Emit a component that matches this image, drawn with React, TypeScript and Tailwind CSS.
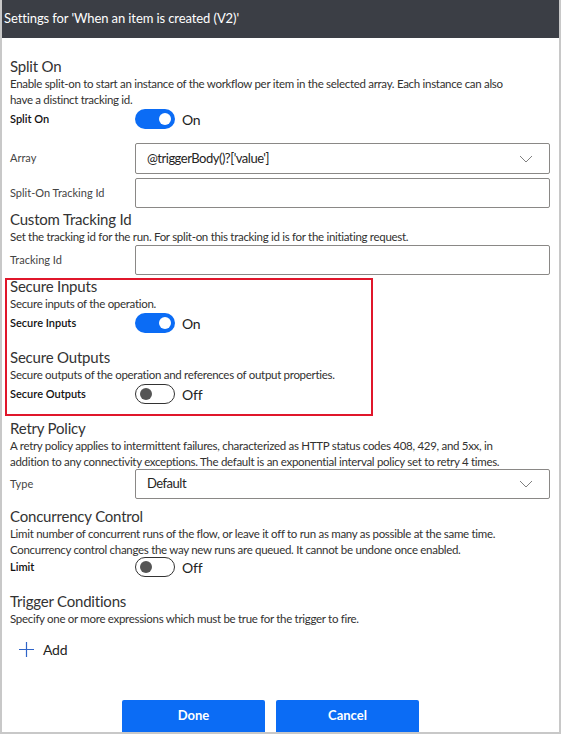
import React from 'react';

const Toggle: React.FC<{ on: boolean }> = ({ on }) => (
  <div className="flex items-center gap-[7px]">
    {on ? (
      <div className="w-[40px] h-[20px] rounded-full bg-[#0b6cf5] flex items-center justify-end pr-[4px]">
        <div className="w-[12px] h-[12px] rounded-full bg-white" />
      </div>
    ) : (
      <div className="w-[40px] h-[20px] rounded-full border border-[#333] bg-white flex items-center pl-[4px]">
        <div className="w-[12px] h-[12px] rounded-full bg-[#555]" />
      </div>
    )}
    <span className="text-[14px] tracking-[-0.2px] text-[#222]">{on ? 'On' : 'Off'}</span>
  </div>
);

const Chevron = () => (
  <svg width="14" height="8" viewBox="0 0 14 8" fill="none">
    <polyline points="1,1 7,7 13,1" stroke="#808080" strokeWidth="1" />
  </svg>
);

const Heading: React.FC<{ children: React.ReactNode }> = ({ children }) => (
  <div className="text-[15px] tracking-[-0.2px] leading-[19px] text-[#333]">{children}</div>
);

const Desc: React.FC<{ children: React.ReactNode }> = ({ children }) => (
  <p className="text-[11.5px] tracking-[-0.3px] leading-[16px] text-[#323130] max-w-[506px]">{children}</p>
);

const Row: React.FC<{ label: string; bold?: boolean; className?: string; children: React.ReactNode }> = ({
  label,
  bold,
  className,
  children,
}) => (
  <div className={`flex items-center ${className ?? ''}`}>
    <div
      className={`w-[125px] shrink-0 text-[11px] ${bold ? 'font-semibold text-[#111]' : 'text-[#444]'}`}
    >
      {label}
    </div>
    <div className="flex-1">{children}</div>
  </div>
);

const Field: React.FC<{ value?: string; select?: boolean; h?: string }> = ({ value, select, h }) => (
  <div
    className={`${h ?? 'h-[30px]'} border border-[#8a8886] rounded-[2px] bg-white flex items-center justify-between pl-[11px] pr-[16px]`}
  >
    <span className="text-[13px] tracking-[-0.5px] text-[#252423]">{value}</span>
    {select && <Chevron />}
  </div>
);

export default function App() {
  return (
    <div className="w-[561px] h-[734px] bg-white font-['Segoe_UI','Lato',sans-serif] flex flex-col border-x-2 border-b-2 border-[#c8c8c8] overflow-hidden">
      {/* Title bar */}
      <div className="h-[38px] shrink-0 bg-[#3b3e45] text-white text-[13px] tracking-[-0.1px] flex items-center pl-[4px] -mx-[2px]">
        Settings for 'When an item is created (V2)'
      </div>

      <div className="flex-1 flex flex-col pl-[8px] pr-[9px] pt-[19px]">
        {/* Split On */}
        <Heading>Split On</Heading>
        <Desc>
          Enable split-on to start an instance of the workflow per item in the selected array. Each instance can also
          have a distinct tracking id.
        </Desc>
        <Row label="Split On" bold className="h-[20px] mt-[1px]">
          <Toggle on />
        </Row>
        <Row label="Array" className="mt-[14px]">
          <Field value="@triggerBody()?['value']" select h="h-[31px]" />
        </Row>
        <Row label="Split-On Tracking Id" className="mt-[4px]">
          <Field />
        </Row>

        {/* Custom Tracking Id */}
        <div className="mt-[2px]">
          <Heading>Custom Tracking Id</Heading>
        </div>
        <Desc>Set the tracking id for the run. For split-on this tracking id is for the initiating request.</Desc>
        <Row label="Tracking Id">
          <Field />
        </Row>

        {/* Highlighted secure section */}
        <div className="mt-[3px] -ml-[5px] w-[368px] h-[138px] border-2 border-[#e0162b] pl-[3px] flex flex-col">
          <div className="-mt-[3px]">
            <Heading>Secure Inputs</Heading>
          </div>
          <Desc>Secure inputs of the operation.</Desc>
          <Row label="Secure Inputs" bold className="h-[20px] mt-[1px]">
            <Toggle on />
          </Row>
          <div className="mt-[15px]">
            <Heading>Secure Outputs</Heading>
          </div>
          <Desc>Secure outputs of the operation and references of output properties.</Desc>
          <Row label="Secure Outputs" bold className="h-[20px] mt-[1px]">
            <Toggle on={false} />
          </Row>
        </div>

        {/* Retry Policy */}
        <div className="mt-[3px]">
          <Heading>Retry Policy</Heading>
        </div>
        <Desc>
          A retry policy applies to intermittent failures, characterized as HTTP status codes 408, 429, and 5xx, in
          addition to any connectivity exceptions. The default is an exponential interval policy set to retry 4 times.
        </Desc>
        <Row label="Type" className="-mt-[1px]">
          <Field value="Default" select />
        </Row>

        {/* Concurrency Control */}
        <div className="mt-[8px]">
          <Heading>Concurrency Control</Heading>
        </div>
        <Desc>
          Limit number of concurrent runs of the flow, or leave it off to run as many as possible at the same time.
          Concurrency control changes the way new runs are queued. It cannot be undone once enabled.
        </Desc>
        <Row label="Limit" bold className="h-[20px] -mt-[1px]">
          <Toggle on={false} />
        </Row>

        {/* Trigger Conditions */}
        <div className="mt-[15px]">
          <Heading>Trigger Conditions</Heading>
        </div>
        <Desc>Specify one or more expressions which must be true for the trigger to fire.</Desc>
        <button className="mt-[12px] ml-[9px] flex items-center gap-[9px] h-[20px] text-[14px] tracking-[-0.2px] text-[#252423]">
          <svg width="15" height="15" viewBox="0 0 15 15" fill="none">
            <path d="M7.5 0v15M0 7.5h15" stroke="#2f64c8" strokeWidth="1.2" />
          </svg>
          Add
        </button>

        {/* Footer */}
        <div className="mt-auto flex gap-[11px] pl-[112px]">
          <button className="w-[143px] h-[32px] rounded-t-[2px] bg-[#0b6cf5] text-white text-[13px] font-bold">
            Done
          </button>
          <button className="w-[143px] h-[32px] rounded-t-[2px] bg-[#0b6cf5] text-white text-[13px] font-bold">
            Cancel
          </button>
        </div>
      </div>
    </div>
  );
}
